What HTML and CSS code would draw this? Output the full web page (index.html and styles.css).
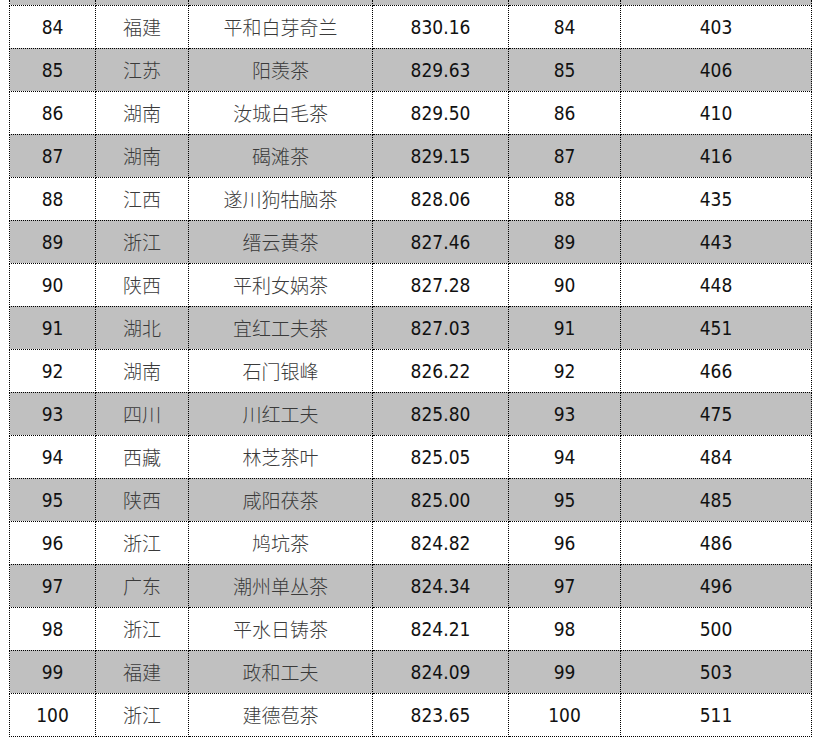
FILE: index.html
```html
<!DOCTYPE html>
<html lang="zh">
<head>
<meta charset="utf-8">
<link rel="stylesheet" href="styles.css">
</head>
<body>
<table class="rank">
<colgroup>
<col class="c1"><col class="c2"><col class="c3"><col class="c4"><col class="c5"><col class="c6">
</colgroup>
<tbody>
<tr class="cut odd"><td></td><td></td><td></td><td></td><td></td><td></td></tr>
<tr><td class="n">84</td><td class="z">福建</td><td class="z">平和白芽奇兰</td><td class="n">830.16</td><td class="n">84</td><td class="n">403</td></tr>
<tr class="odd"><td class="n">85</td><td class="z">江苏</td><td class="z">阳羡茶</td><td class="n">829.63</td><td class="n">85</td><td class="n">406</td></tr>
<tr><td class="n">86</td><td class="z">湖南</td><td class="z">汝城白毛茶</td><td class="n">829.50</td><td class="n">86</td><td class="n">410</td></tr>
<tr class="odd"><td class="n">87</td><td class="z">湖南</td><td class="z">碣滩茶</td><td class="n">829.15</td><td class="n">87</td><td class="n">416</td></tr>
<tr><td class="n">88</td><td class="z">江西</td><td class="z">遂川狗牯脑茶</td><td class="n">828.06</td><td class="n">88</td><td class="n">435</td></tr>
<tr class="odd"><td class="n">89</td><td class="z">浙江</td><td class="z">缙云黄茶</td><td class="n">827.46</td><td class="n">89</td><td class="n">443</td></tr>
<tr><td class="n">90</td><td class="z">陕西</td><td class="z">平利女娲茶</td><td class="n">827.28</td><td class="n">90</td><td class="n">448</td></tr>
<tr class="odd"><td class="n">91</td><td class="z">湖北</td><td class="z">宜红工夫茶</td><td class="n">827.03</td><td class="n">91</td><td class="n">451</td></tr>
<tr><td class="n">92</td><td class="z">湖南</td><td class="z">石门银峰</td><td class="n">826.22</td><td class="n">92</td><td class="n">466</td></tr>
<tr class="odd"><td class="n">93</td><td class="z">四川</td><td class="z">川红工夫</td><td class="n">825.80</td><td class="n">93</td><td class="n">475</td></tr>
<tr><td class="n">94</td><td class="z">西藏</td><td class="z">林芝茶叶</td><td class="n">825.05</td><td class="n">94</td><td class="n">484</td></tr>
<tr class="odd"><td class="n">95</td><td class="z">陕西</td><td class="z">咸阳茯茶</td><td class="n">825.00</td><td class="n">95</td><td class="n">485</td></tr>
<tr><td class="n">96</td><td class="z">浙江</td><td class="z">鸠坑茶</td><td class="n">824.82</td><td class="n">96</td><td class="n">486</td></tr>
<tr class="odd"><td class="n">97</td><td class="z">广东</td><td class="z">潮州单丛茶</td><td class="n">824.34</td><td class="n">97</td><td class="n">496</td></tr>
<tr><td class="n">98</td><td class="z">浙江</td><td class="z">平水日铸茶</td><td class="n">824.21</td><td class="n">98</td><td class="n">500</td></tr>
<tr class="odd"><td class="n">99</td><td class="z">福建</td><td class="z">政和工夫</td><td class="n">824.09</td><td class="n">99</td><td class="n">503</td></tr>
<tr><td class="n">100</td><td class="z">浙江</td><td class="z">建德苞茶</td><td class="n">823.65</td><td class="n">100</td><td class="n">511</td></tr>
</tbody>
</table>
</body>
</html>
```

FILE: styles.css
```css
html, body {
  margin: 0;
  padding: 0;
  background: #ffffff;
}
body {
  padding-left: 9px;
}
.rank {
  border-collapse: collapse;
  table-layout: fixed;
  width: 802px;
}
.c1 { width: 86px; }
.c2 { width: 93px; }
.c3 { width: 184px; }
.c4 { width: 136px; }
.c5 { width: 112px; }
.c6 { width: 191px; }
.rank td {
  border: 1px dotted #000000;
  height: 43px;
  padding: 0;
  text-align: center;
  vertical-align: middle;
  box-sizing: border-box;
  line-height: 22px;
}
.rank tr.cut td {
  height: 5px;
  border-top: none;
}
.rank tr.odd td {
  background: #c0c0c0;
}
.n {
  font-family: "DejaVu Sans", sans-serif;
  font-stretch: condensed;
  font-size: 19px;
  color: #111111;
}
.z {
  font-family: "Noto Sans CJK SC", sans-serif;
  font-weight: 300;
  font-size: 19px;
  color: #3a3a3a;
}
```
